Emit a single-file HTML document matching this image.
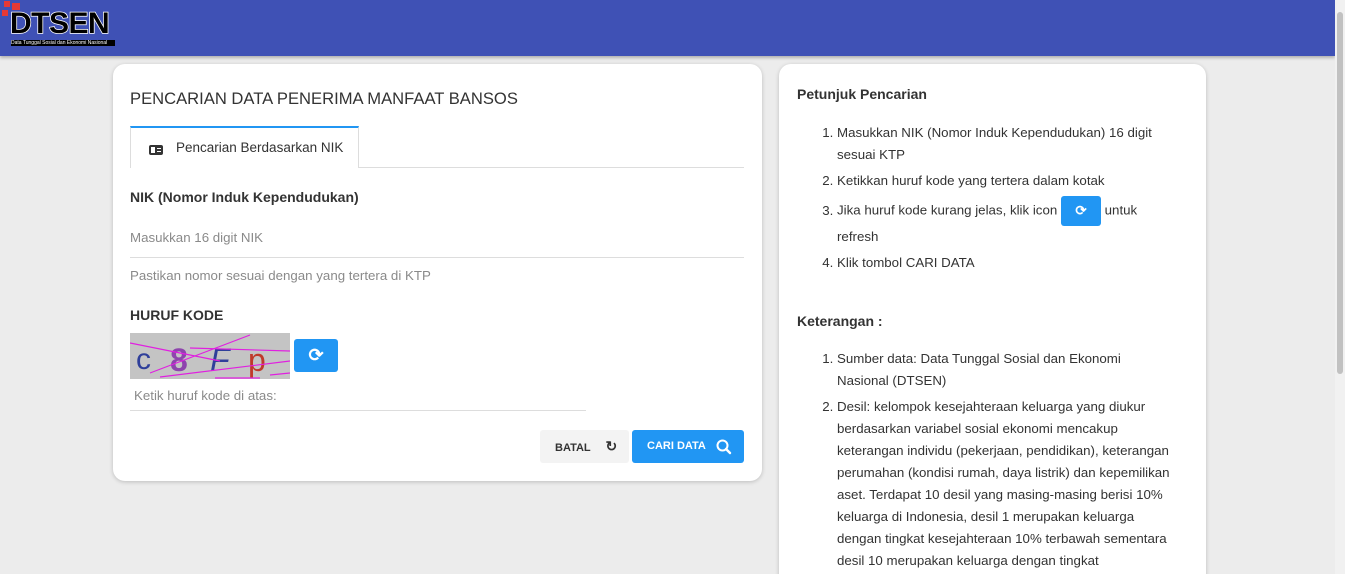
<!DOCTYPE html>
<html><head><meta charset="utf-8"><style>
*{box-sizing:border-box;margin:0;padding:0}
html,body{width:1345px;height:574px;overflow:hidden}
body{background:#ececec;font-family:"Liberation Sans",sans-serif;color:#333;position:relative}
.hdr{position:absolute;left:0;top:0;width:1335px;height:56px;background:#3f51b5;box-shadow:0 2px 3px rgba(0,0,0,.25)}
.sb{position:absolute;right:0;top:0;width:10px;height:574px;background:#f1f1f1}
.sb div{position:absolute;left:2px;top:12px;width:6px;height:362px;background:#c1c1c1;border-radius:3px}
.card{position:absolute;background:#fff;border-radius:12px;box-shadow:0 1px 4px rgba(0,0,0,.2)}
.abs{position:absolute}
.gray{color:#8a8a8a}
ol{padding-left:20px}
.r li{font-size:13.3px;line-height:22px;margin-bottom:4px;color:#333}
</style></head><body>
<div class="hdr">
 <div class="abs" style="left:4px;top:1px;width:6px;height:6px;background:#e53935"></div>
 <div class="abs" style="left:12px;top:3px;width:8px;height:7px;background:#e53935"></div>
 <div class="abs" style="left:2px;top:10px;width:6px;height:6px;background:#e53935"></div>
 <div class="abs" style="left:10px;top:7px;font:bold 30px 'Liberation Sans',sans-serif;color:#000;-webkit-text-stroke:1.5px #fff;paint-order:stroke fill;letter-spacing:-0.5px">DTSEN</div>
 <div class="abs" style="left:11px;top:40px;font-size:5px;color:#fff;background:#000;white-space:nowrap;width:104px;overflow:hidden">Data Tunggal Sosial dan Ekonomi Nasional</div>
</div>
<div class="sb"><div></div></div>

<div class="card" style="left:113px;top:64px;width:649px;height:417px">
 <div class="abs" style="left:17px;top:25px;font-size:16.6px;color:#333">PENCARIAN DATA PENERIMA MANFAAT BANSOS</div>
 <div class="abs" style="left:17px;top:62px;width:229px;height:42px;border:1px solid #ddd;border-top:2px solid #2196f3;border-bottom:none;background:#fff"></div>
 <div class="abs" style="left:246px;top:103px;width:385px;height:1px;background:#ddd"></div>
 <div class="abs" style="left:36px;top:81px;width:14px;height:10px;background:#333;border-radius:2px"><div class="abs" style="left:2px;top:2px;width:4px;height:6px;background:#fff"></div><div class="abs" style="left:8px;top:3px;width:4px;height:1px;background:#fff"></div><div class="abs" style="left:8px;top:6px;width:4px;height:1px;background:#fff"></div></div>
 <div class="abs" style="left:63px;top:76px;font-size:13.5px">Pencarian Berdasarkan NIK</div>
 <div class="abs" style="left:17px;top:125px;font-size:14px;font-weight:bold">NIK (Nomor Induk Kependudukan)</div>
 <div class="abs gray" style="left:17px;top:166px;font-size:13.3px">Masukkan 16 digit NIK</div>
 <div class="abs" style="left:17px;top:193px;width:614px;height:1px;background:#ddd"></div>
 <div class="abs gray" style="left:17px;top:204px;font-size:13.3px">Pastikan nomor sesuai dengan yang tertera di KTP</div>
 <div class="abs" style="left:17px;top:243px;font-size:14px;font-weight:bold">HURUF KODE</div>
 <svg class="abs" style="left:17px;top:269px" width="160" height="46"><rect width="160" height="46" fill="#c4c4c4"/>
  <text x="6" y="36" font-size="30" fill="#2f3f9a" font-family="Liberation Sans">c</text>
  <text x="40" y="38" font-size="32" font-weight="bold" fill="#8e44ad" font-family="Liberation Sans">8</text>
  <text x="80" y="38" font-size="32" font-style="italic" fill="#2f3f9a" font-family="Liberation Sans">F</text>
  <text x="118" y="38" font-size="32" fill="#c0392b" font-family="Liberation Sans">p</text>
  <g stroke="#e020e0" stroke-width="1.2"><line x1="20" y1="40" x2="120" y2="2"/><line x1="30" y1="44" x2="160" y2="28"/><line x1="60" y1="15" x2="160" y2="18"/><line x1="0" y1="10" x2="90" y2="28"/><line x1="85" y1="45" x2="130" y2="45"/><line x1="140" y1="42" x2="160" y2="40"/></g></svg>
 <div class="abs" style="left:181px;top:275px;width:44px;height:33px;background:#2196f3;border-radius:3px;color:#fff;text-align:center;font-size:18px;line-height:33px;font-weight:bold">⟳</div>
 <div class="abs gray" style="left:21px;top:324px;font-size:13.3px">Ketik huruf kode di atas:</div>
 <div class="abs" style="left:17px;top:346px;width:456px;height:1px;background:#ddd"></div>
 <div class="abs" style="left:427px;top:366px;width:89px;height:33px;background:#f3f3f3;border-radius:3px;font-size:11px;font-weight:bold;line-height:33px;padding-left:15px">BATAL <span style="margin-left:12px;font-size:14px">↻</span></div>
 <div class="abs" style="left:519px;top:366px;width:112px;height:33px;background:#2196f3;border-radius:3px;color:#fff;font-size:11px;font-weight:bold;line-height:33px;padding-left:15px">CARI DATA
  <svg class="abs" style="left:84px;top:9px" width="16" height="16"><circle cx="6.5" cy="6.5" r="5" fill="none" stroke="#fff" stroke-width="2"/><line x1="10" y1="10" x2="14" y2="14" stroke="#fff" stroke-width="2.4" stroke-linecap="round"/></svg></div>
</div>

<div class="card r" style="left:779px;top:64px;width:427px;height:530px">
 <div class="abs" style="left:18px;top:22px;font-size:14px;font-weight:bold">Petunjuk Pencarian</div>
 <ol class="abs" style="left:38px;top:58px;width:360px">
  <li>Masukkan NIK (Nomor Induk Kependudukan) 16 digit sesuai KTP</li>
  <li>Ketikkan huruf kode yang tertera dalam kotak</li>
  <li>Jika huruf kode kurang jelas, klik icon <span style="display:inline-block;width:40px;height:30px;background:#2196f3;border-radius:3px;vertical-align:middle;color:#fff;text-align:center;line-height:30px;font-weight:bold">⟳</span> untuk refresh</li>
  <li>Klik tombol CARI DATA</li>
 </ol>
 <div class="abs" style="left:18px;top:249px;font-size:14px;font-weight:bold">Keterangan :</div>
 <ol class="abs" style="left:38px;top:284px;width:356px">
  <li>Sumber data: Data Tunggal Sosial dan Ekonomi Nasional (DTSEN)</li>
  <li>Desil: kelompok kesejahteraan keluarga yang diukur berdasarkan variabel sosial ekonomi mencakup keterangan individu (pekerjaan, pendidikan), keterangan perumahan (kondisi rumah, daya listrik) dan kepemilikan aset. Terdapat 10 desil yang masing-masing berisi 10% keluarga di Indonesia, desil 1 merupakan keluarga dengan tingkat kesejahteraan 10% terbawah sementara desil 10 merupakan keluarga dengan tingkat</li>
 </ol>
</div>
</body></html>
